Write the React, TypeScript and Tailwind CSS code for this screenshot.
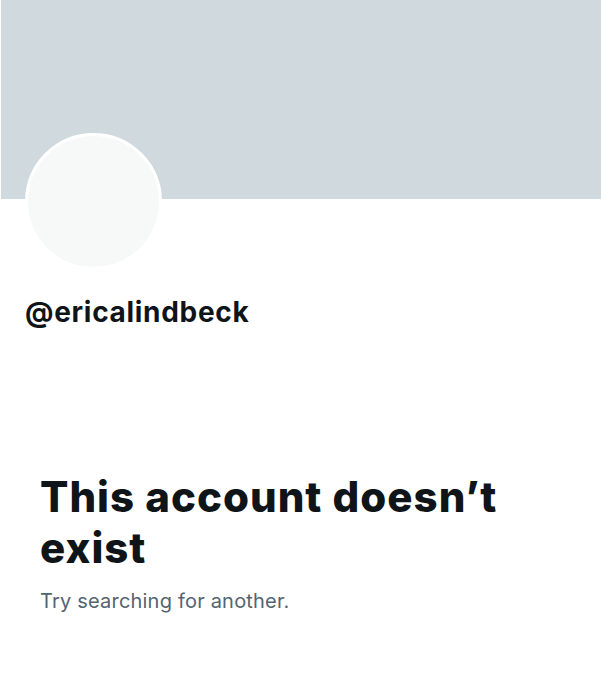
export default function App() {
  return (
    <div className="w-[602px] h-[680px] bg-white overflow-hidden" style={{ fontFamily: 'Inter, "Noto Sans", sans-serif' }}>
      <div className="mx-px h-[199px] bg-[#cfd9de]" />
      <div className="px-[25px]">
        <div className="-mt-[66px] w-[137px] h-[137px] rounded-full bg-[#f7f9f9] border-[3px] border-white" />
        <div className="mt-[26px] text-[28px] font-bold leading-[32px] text-[#0f1419] tracking-[0.7px]">@ericalindbeck</div>
      </div>
      <div className="px-[40px] mt-[143px]">
        <h1 className="text-[42px] font-extrabold leading-[51px] text-[#0f1419] tracking-[1px]">This account doesn’t exist</h1>
        <p className="mt-[16px] text-[20px] leading-[24px] text-[#536471] tracking-[0.2px]">Try searching for another.</p>
      </div>
    </div>
  );
}
